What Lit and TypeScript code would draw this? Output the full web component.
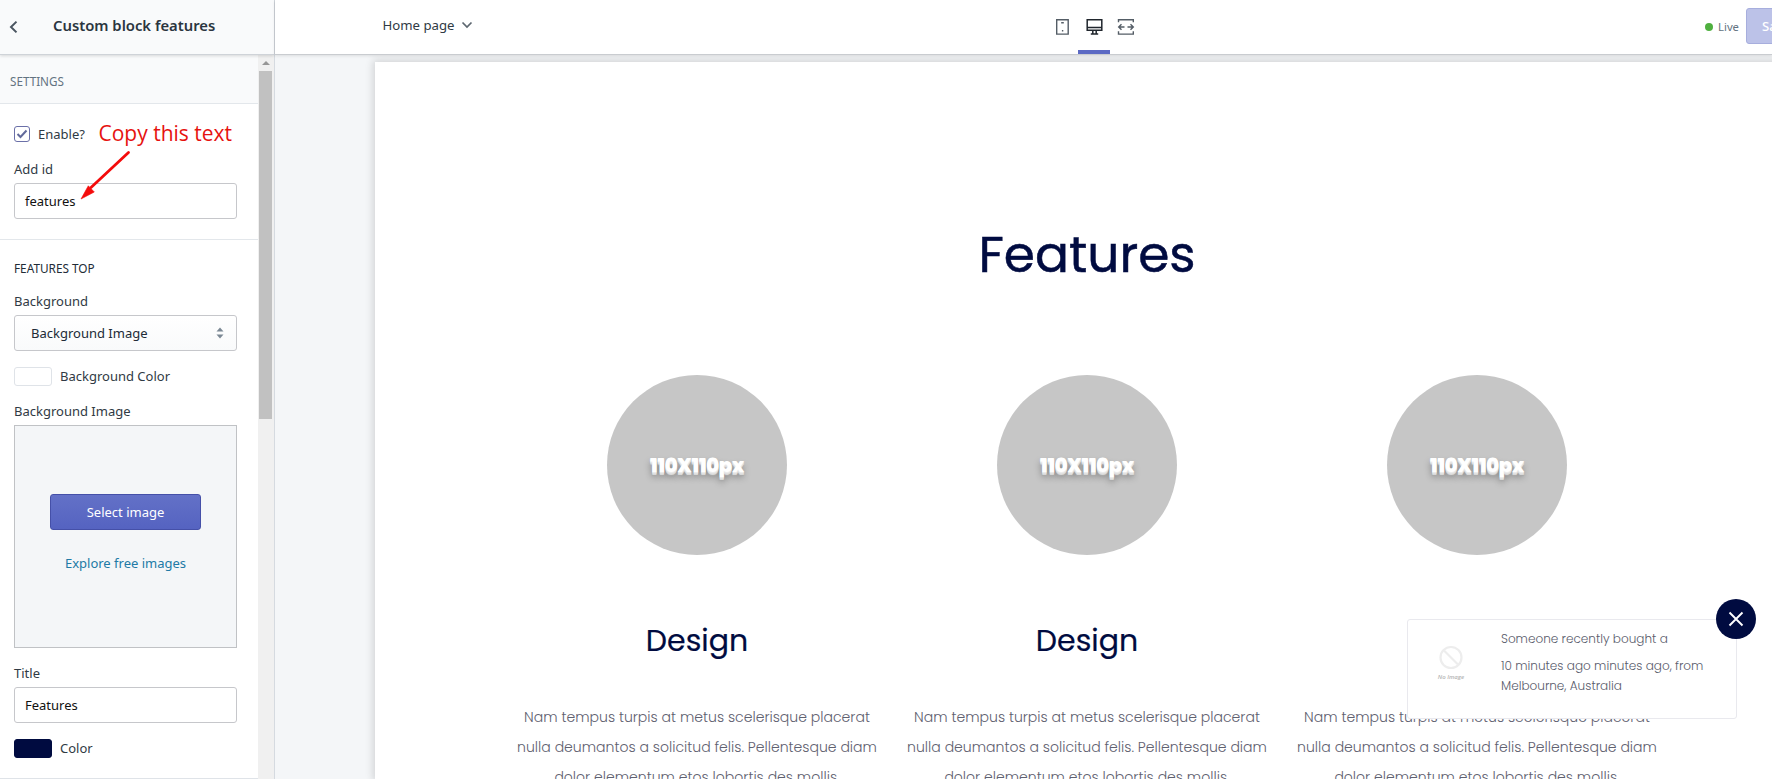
import { LitElement, html, css } from 'lit';
import { customElement, property } from 'lit/decorators.js';

@customElement('settings-panel')
class SettingsPanel extends LitElement {
  static styles = css`
    :host { display: flex; flex-direction: column; width: 274px; height: 779px; border-right: 1px solid #d5dae0; background: #fff; color: #303a44; font: 400 13px/20px "Noto Sans", sans-serif; box-sizing: content-box; }
    * { box-sizing: border-box; }
    .head { height: 55px; flex: none; background: #f9fafb; border-bottom: 1px solid #cfd3d8; display: flex; align-items: center; padding: 0 0 4px 8px; position: relative; z-index: 1; box-shadow: 0 1px 3px rgba(0,0,0,.14); }
    .head svg { margin-top: 3px; }
    .title { margin-left: 33px; font: 600 14.800px/20px "Noto Sans", sans-serif; color: #2b353f; white-space: nowrap; }
    .body { display: flex; flex: 1; min-height: 0; }
    .form { width: 258px; overflow: hidden; display: flex; flex-direction: column; border-bottom: 1px solid #dfe3e8; }
    .section { height: 49px; flex: none; padding: 16px 10px 0; background: #f9fafb; border-bottom: 1px solid #e3e7eb; color: #637381; font-size: 11.700px; }
    .block { padding: 20px 21px 20px 14px; border-bottom: 1px solid #e3e7eb; height: 136px; flex: none; }
    .row { display: flex; align-items: center; }
    .gap { margin-top: 15px; }
    .enable { height: 20px; }
    .box { width: 16px; height: 16px; border: 1px solid #6b70a8; border-radius: 3px; display: flex; align-items: center; justify-content: center; margin-right: 8px; }
    .field { height: 36px; border: 1px solid #c6c7cb; border-radius: 3px; padding: 7px 10px; color: #111; background: #fff; }
    .select { display: flex; justify-content: space-between; padding: 7px 11px 7px 16px; background: linear-gradient(#fff, #f9fafb); color: #212b36; }
    .top { padding: 18px 21px 0 14px; }
    .h { font-size: 11.800px; color: #212b36; margin-bottom: 13px; }
    .lab { height: 20px; margin-bottom: 4px; }
    .lab.gap { margin-top: 15px; }
    .swatch { width: 38px; height: 19px; border-radius: 3px; margin-right: 8px; border: 1px solid #dfe3e8; }
    .navy { background: #000b40; border-color: #000b40; }
    .drop { height: 223px; border: 1px solid #c0c2c5; background: #f4f6f8; display: flex; flex-direction: column; align-items: center; padding-top: 68px; }
    .btn { width: 151px; height: 36px; border: 1px solid #4550a8; border-radius: 3px; background: linear-gradient(#6371c7, #5563c1); color: #fff; text-align: center; line-height: 34px; }
    .link { color: #217aa6; margin-top: 23px; }
    .scroll { width: 16px; padding-left: 1px; background: #f0f0f0; display: flex; flex-direction: column; align-items: flex-start; }
    .up { margin: 6px 0 0 2.500px; width: 0; height: 0; border: 4px solid transparent; border-top: 0; border-bottom-color: #969696; }
    .thumb { margin-top: 6px; width: 13px; height: 348px; background: #c1c1c1; }
    .note { position: absolute; left: 98.500px; top: 117px; font: 400 21px/32px "Open Sans", sans-serif; color: #e6120f; white-space: nowrap; }
    .arrow { position: absolute; left: 76px; top: 148px; }
  `;
  render() {
    return html`
      <div class="head">
        <svg width="12" height="14" viewBox="0 0 12 14" fill="none" stroke="#4a5560" stroke-width="2"><path d="M8.500 1.600 3 7l5.500 5.400"/></svg>
        <span class="title">Custom block features</span>
      </div>
      <div class="body">
        <div class="form">
          <div class="section">SETTINGS</div>
          <div class="block">
            <div class="row enable"><span class="box"><svg width="12" height="10" viewBox="0 0 12 10" fill="none" stroke="#626a9b" stroke-width="2"><path d="M1.500 5 4.500 8l6-6.500"/></svg></span>Enable?</div>
            <div class="lab gap">Add id</div>
            <div class="field">features</div>
          </div>
          <div class="top">
            <div class="h">FEATURES TOP</div>
            <div class="lab">Background</div>
            <div class="field select">Background Image
              <svg width="10" height="20" viewBox="0 0 10 20" fill="#7b8894"><path d="M1.500 8.500 5 4.500l3.500 4zM1.500 11.500 5 15.500l3.500-4z"/></svg>
            </div>
            <div class="row gap"><span class="swatch"></span>Background Color</div>
            <div class="lab gap">Background Image</div>
            <div class="drop"><div class="btn">Select image</div><div class="link">Explore free images</div></div>
            <div class="lab gap">Title</div>
            <div class="field">Features</div>
            <div class="row gap"><span class="swatch navy"></span>Color</div>
          </div>
        </div>
        <div class="scroll"><i class="up"></i><i class="thumb"></i></div>
      </div>
      <span class="note">Copy this text</span>
      <svg class="arrow" width="58" height="54" viewBox="0 0 58 54"><path d="M52.500 4.500 15 39.500" stroke="#f40b0b" stroke-width="2.800" stroke-linecap="round"/><path d="M5 51 12.300 37.800 18.300 44z" fill="#f40b0b" stroke="#f40b0b" stroke-width=".6"/></svg>
    `;
  }
}

@customElement('editor-bar')
class EditorBar extends LitElement {
  static styles = css`
    :host { display: grid; grid-template-columns: 769px auto 1fr; height: 55px; flex: none; box-sizing: border-box; background: #fff; border-bottom: 1px solid #c9ccd0; box-shadow: 0 1px 3px rgba(0,0,0,.1); font: 400 13.200px/20px "Noto Sans", sans-serif; color: #303a44; position: relative; z-index: 1; }
    .page { padding: 15px 0 0 107.500px; display: flex; align-items: flex-start; gap: 6px; white-space: nowrap; }
    .page svg { margin-top: 6px; }
    .devices { display: flex; padding-left: 3px; }
    .d { width: 31px; height: 54px; display: flex; justify-content: center; padding-top: 18px; box-sizing: border-box; }
    .on { width: 32px; border-bottom: 4px solid #5c6ac4; }
    .right { display: flex; justify-content: flex-end; overflow: hidden; }
    .live { display: flex; align-items: center; font-size: 11.300px; color: #637381; height: 53px; gap: 5px; margin-right: 7px; }
    .dot { width: 8px; height: 8px; border-radius: 50%; background: #4fb03f; }
    .save { box-sizing: border-box; flex: none; width: 66px; margin-right: -40px; height: 36px; margin-top: 8px; border: 1px solid #a7aedd; border-radius: 3px; background: #bcc2e8; color: #fff; line-height: 34px; padding-left: 15px; font-weight: 500; }
  `;
  render() {
    return html`
      <div class="page">Home page<svg width="12" height="9" viewBox="0 0 12 9" fill="none" stroke="#5d6770" stroke-width="1.700"><path d="M1.500 1.500 6 6l4.500-4.500"/></svg></div>
      <div class="devices">
        <div class="d"><svg width="15" height="18" viewBox="0 0 15 18" fill="none" stroke="#545d66" stroke-width="1.400"><path d="M1.700 1.700h11.500v14.400H1.700z"/><path d="M6.200 4.800h2.600M6.900 12.800h1.400"/></svg></div>
        <div class="d on"><svg width="17" height="18" viewBox="0 0 17 18" fill="none" stroke="#20262d" stroke-width="1.500"><path d="M1.200 1.700h14.600v10.500H1.200zM1.200 9.500h14.600M6.800 12.500v3M10.200 12.500v3M4.800 16h7.400"/></svg></div>
        <div class="d"><svg width="18" height="18" viewBox="0 0 18 18" fill="none" stroke="#545d66" stroke-width="1.400"><path d="M1.500 4.300V1.700h14.800v2.600M1.500 13.300v2.800h14.800v-2.800M7.500 9H2M4.500 6.200 1.700 9l2.800 2.800M10.500 9h5.500M13.500 6.200 16.300 9l-2.800 2.800"/></svg></div>
      </div>
      <div class="right"><div class="live"><i class="dot"></i>Live</div><div class="save">Save</div></div>
    `;
  }
}

@customElement('feature-card')
class FeatureCard extends LitElement {
  @property() heading = '';
  static styles = css`
    :host { display: flex; flex-direction: column; align-items: center; width: 390px; text-align: center; }
    .pic { width: 180px; height: 180px; border-radius: 50%; background: #c6c6c6; display: flex; align-items: center; justify-content: center; }
    .pic span { color: #fff; font: 800 19.500px/24px Poppins, Inter, sans-serif; letter-spacing: -.2px; text-shadow: 0 1px #ededed, 0 2px #e2e2e2, 0 3px #d9d9d9, 0 4px 1px #aaa, 0 5px 7px rgba(0,0,0,.4); margin-top: 1px; }
    h3 { margin: 62px 0 0; font: 400 30px/48px Poppins, Inter, sans-serif; color: #000b40; height: 48px; -webkit-text-stroke: .2px #000b40; }
    p { margin: 37px 0 0; font: 300 14.050px/30px Poppins, Inter, sans-serif; color: #5f6170; white-space: nowrap; }
  `;
  render() {
    return html`<div class="pic"><span>110X110px</span></div><h3>${this.heading}</h3>
      <p>Nam tempus turpis at metus scelerisque placerat<br>nulla deumantos a solicitud felis. Pellentesque diam<br>dolor elementum etos lobortis des mollis.</p>`;
  }
}

@customElement('sales-popup')
class SalesPopup extends LitElement {
  static styles = css`
    :host { display: flex; box-sizing: border-box; width: 330px; height: 100px; border: 1px solid #e9e9ee; border-radius: 3px; background: #fff; font: 300 12.050px/20px Poppins, Inter, sans-serif; color: #5a5c6c; }
    .img { width: 86px; padding-top: 25px; display: flex; flex-direction: column; align-items: center; flex: none; font: italic 600 6px/8px "Open Sans", sans-serif; color: #b5b5b5; }
    .img svg { margin-bottom: 3px; }
    .txt { padding: 9px 0 0 7px; white-space: nowrap; }
    .txt div + div { margin-top: 7px; }
    .close { position: absolute; right: -20px; top: -21px; width: 40px; height: 40px; border-radius: 50%; background: #000b40; display: flex; align-items: center; justify-content: center; }
  `;
  render() {
    return html`
      <div class="img"><svg width="24" height="25" viewBox="0 0 24 25" fill="none" stroke="#ededed" stroke-width="2.200"><circle cx="12" cy="12.500" r="10.500"/><path d="M5 5.500 19 19.500"/></svg>No Image</div>
      <div class="txt"><div>Someone recently bought a</div><div>10 minutes ago minutes ago, from<br>Melbourne, Australia</div></div>
      <div class="close"><svg width="16" height="16" viewBox="0 0 16 16" stroke="#fff" stroke-width="1.900"><path d="M1.500 1.500 14.500 14.500M14.500 1.500 1.500 14.500"/></svg></div>
    `;
  }
}

@customElement('app-root')
class AppRoot extends LitElement {
  static styles = css`
    :host { display: flex; width: 1772px; height: 779px; overflow: hidden; position: relative; background: #f4f6f8; }
    .main { flex: 1; min-width: 0; display: flex; flex-direction: column; }
    .stage { flex: 1; min-height: 0; padding: 7px 0 0 100px; display: flex; overflow: hidden; }
    .preview { flex: none; width: 1424px; background: #fff; box-shadow: 0 0 8px 2px rgba(0,0,0,.14); }
    h1 { margin: 155px 0 0; height: 76px; font: 400 50.300px/76px Poppins, Inter, sans-serif; color: #000b40; -webkit-text-stroke: .5px #000b40; text-align: center; }
    .cards { display: flex; margin: 82px 0 0 127px; }
    sales-popup { position: absolute; left: 1407px; top: 619px; z-index: 2; }
  `;
  render() {
    return html`
      <settings-panel></settings-panel>
      <div class="main">
        <editor-bar></editor-bar>
        <div class="stage"><div class="preview">
          <h1>Features</h1>
          <div class="cards">${['Design', 'Design', 'Design'].map(h => html`<feature-card .heading=${h}></feature-card>`)}</div>
        </div></div>
      </div>
      <sales-popup></sales-popup>
    `;
  }
}
